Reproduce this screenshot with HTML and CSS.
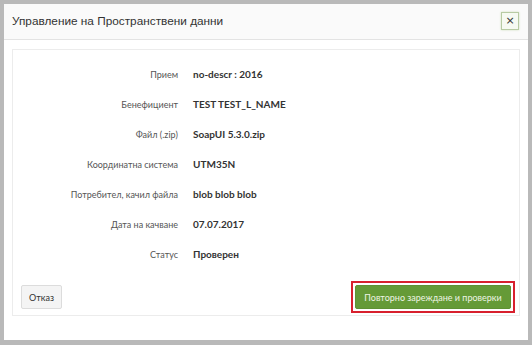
FILE: index.html
```html
<!DOCTYPE html>
<html lang="bg">
<head>
<meta charset="utf-8">
<link rel="stylesheet" href="styles.css">
</head>
<body>
<div class="modal">
  <div class="modal-header">
    <div class="modal-title">Управление на Пространствени данни</div>
    <button class="close-btn" type="button">×</button>
  </div>
  <div class="modal-body">
    <div class="panel">
      <div class="details">
        <div class="label">Прием</div><div class="value">no-descr : 2016</div>
        <div class="label">Бенефициент</div><div class="value">TEST TEST_L_NAME</div>
        <div class="label">Файл (.zip)</div><div class="value">SoapUI 5.3.0.zip</div>
        <div class="label">Координатна система</div><div class="value">UTM35N</div>
        <div class="label">Потребител, качил файла</div><div class="value">blob blob blob</div>
        <div class="label">Дата на качване</div><div class="value">07.07.2017</div>
        <div class="label">Статус</div><div class="value">Проверен</div>
      </div>
      <div class="actions">
        <button class="btn btn-default" type="button">Отказ</button>
        <div class="highlight">
          <button class="btn btn-success" type="button">Повторно зареждане и проверки</button>
        </div>
      </div>
    </div>
  </div>
</div>
</body>
</html>
```
FILE: styles.css
```css
html, body {
  margin: 0;
  padding: 0;
}
body {
  background: #b9b9b9;
  padding: 4px 4px 5px 4px;
  width: 532px;
  height: 345px;
  box-sizing: border-box;
  font-family: "Lato", "Open Sans", sans-serif;
}
.modal {
  background: #ffffff;
  width: 524px;
  height: 336px;
  display: flex;
  flex-direction: column;
}
.modal-header {
  display: flex;
  align-items: center;
  justify-content: space-between;
  padding: 8px 9px 9px 8px;
  background: #fafafa;
  border-bottom: 1px solid #e3e3e3;
}
.modal-title {
  font-family: "Liberation Sans", Arial, sans-serif;
  font-size: 11.8px;
  color: #333333;
}
.close-btn {
  width: 18px;
  height: 18px;
  padding: 0;
  margin: 0;
  border: 1px solid #b7cba3;
  background: #f6faf2;
  color: #333;
  font-family: "DejaVu Sans", sans-serif;
  font-size: 11px;
  line-height: 14px;
  box-shadow: 0 0 2px #cfe0bd;
}
.modal-body {
  padding: 9px 8px 25px 8px;
}
.panel {
  border: 1px solid #ececec;
  padding: 9px 4px 2px 8px;
}
.details {
  display: grid;
  grid-template-columns: 157px 1fr;
  column-gap: 15px;
  grid-auto-rows: 30px;
  align-items: center;
}
.label {
  text-align: right;
  color: #555555;
  font-size: 9px;
}
.value {
  font-weight: bold;
  color: #333333;
  font-size: 10px;
}
.actions {
  margin-top: 12px;
  display: flex;
  justify-content: space-between;
  align-items: center;
}
.btn {
  font-family: "Lato", "Open Sans", sans-serif;
  font-size: 9px;
  height: 24px;
  margin: 0;
  border-radius: 2px;
  white-space: nowrap;
  cursor: pointer;
}
.btn-default {
  width: 41px;
  padding: 0;
  background: #f4f4f4;
  border: 1px solid #dcdcdc;
  color: #333;
}
.highlight {
  border: 2px solid #d8202e;
  padding: 2px;
  display: flex;
}
.btn-success {
  width: 156px;
  padding: 0;
  background: #659a37;
  border: 1px solid #5e9133;
  color: #eef5e4;
}
```
